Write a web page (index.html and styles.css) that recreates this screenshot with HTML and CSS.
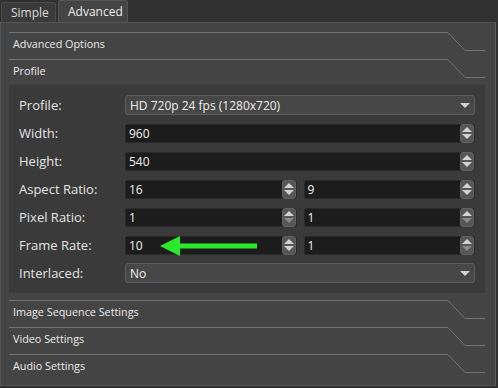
FILE: index.html
```html
<!DOCTYPE html>
<html>
<head>
<meta charset="utf-8">
<link rel="stylesheet" href="styles.css">
</head>
<body>
<div class="tabs">
  <div class="tab">Simple</div>
  <div class="tab active">Advanced</div>
</div>
<div class="pane">
  <div class="hdr"><div class="h-left">Advanced Options</div><svg class="h-diag" width="17" height="19" viewBox="0 0 17 19"><path d="M0 0.5 L17 18.5" stroke="#727272" stroke-width="1" fill="none"/></svg><div class="h-right"></div></div>
  <div class="hdr"><div class="h-left">Profile</div><svg class="h-diag" width="17" height="19" viewBox="0 0 17 19"><path d="M0 0.5 L17 18.5" stroke="#727272" stroke-width="1" fill="none"/></svg><div class="h-right"></div></div>
  <div class="content">
    <div class="row"><div class="lbl">Profile:</div><div class="combo"><span>HD 720p 24 fps (1280x720)</span><span class="caret"></span></div></div>
    <div class="row"><div class="lbl">Width:</div><div class="spin"><span class="val">960</span><span class="btns"><i class="up"></i><i class="dn"></i></span></div></div>
    <div class="row"><div class="lbl">Height:</div><div class="spin"><span class="val">540</span><span class="btns"><i class="up"></i><i class="dn"></i></span></div></div>
    <div class="row"><div class="lbl">Aspect Ratio:</div><div class="pair"><div class="spin"><span class="val">16</span><span class="btns"><i class="up"></i><i class="dn"></i></span></div><div class="spin"><span class="val">9</span><span class="btns"><i class="up"></i><i class="dn"></i></span></div></div></div>
    <div class="row"><div class="lbl">Pixel Ratio:</div><div class="pair"><div class="spin"><span class="val">1</span><span class="btns"><i class="up"></i><i class="dn off"></i></span></div><div class="spin"><span class="val">1</span><span class="btns"><i class="up"></i><i class="dn off"></i></span></div></div></div>
    <div class="row"><div class="lbl">Frame Rate:</div><div class="pair"><div class="spin arrowhost"><span class="val">10</span><svg class="arrow" width="100" height="22" viewBox="0 0 100 22"><path d="M0 11 L20 1 L20 8.5 L97 8.5 L97 13.5 L20 13.5 L20 21 Z" fill="#2bea2b"/></svg><span class="btns"><i class="up"></i><i class="dn"></i></span></div><div class="spin"><span class="val">1</span><span class="btns"><i class="up"></i><i class="dn off"></i></span></div></div></div>
    <div class="row"><div class="lbl">Interlaced:</div><div class="combo"><span>No</span><span class="caret"></span></div></div>
  </div>
  <div class="hdr gap"><div class="h-left">Image Sequence Settings</div><svg class="h-diag" width="17" height="19" viewBox="0 0 17 19"><path d="M0 0.5 L17 18.5" stroke="#727272" stroke-width="1" fill="none"/></svg><div class="h-right"></div></div>
  <div class="hdr"><div class="h-left">Video Settings</div><svg class="h-diag" width="17" height="19" viewBox="0 0 17 19"><path d="M0 0.5 L17 18.5" stroke="#727272" stroke-width="1" fill="none"/></svg><div class="h-right"></div></div>
  <div class="hdr"><div class="h-left">Audio Settings</div><svg class="h-diag" width="17" height="19" viewBox="0 0 17 19"><path d="M0 0.5 L17 18.5" stroke="#727272" stroke-width="1" fill="none"/></svg><div class="h-right"></div></div>
</div>
</body>
</html>
```
FILE: styles.css
```css
* { box-sizing: border-box; }
html, body { margin: 0; padding: 0; background: #303030; }
body {
  width: 498px; height: 388px; overflow: hidden;
  font-family: "Open Sans", "DejaVu Sans", sans-serif;
  color: #e8e8e8;
}
.tabs {
  display: flex; align-items: flex-end; height: 22px; padding-left: 1px; gap: 2px;
}
.tab {
  height: 20px; padding: 0 9px; font-size: 12px; line-height: 20px;
  background: #3a3a3a; border: 1px solid #4a4a4a; border-bottom: none;
  border-radius: 3px 3px 0 0; color: #dcdcdc; width: 55px;
}
.tab.active {
  height: 22px; line-height: 21px; background: #444444; width: 70px; color: #eeeeee;
  border-color: #555;
}
.pane {
  width: 496px; height: 364px; background: #444444;
  border: 1px solid #555555; border-right-color: #5c5c5c;
  padding: 9px 10px 0 8px;
}
.hdr { display: flex; height: 27px; font-size: 10.8px; }
.h-left {
  flex: 1; border-top: 1px solid #727272; padding: 3px 0 0 4px; line-height: 15px; color: #eaeaea;
}
.h-diag { flex: none; display: block; }
.h-right { width: 20px; margin-top: 18px; border-top: 1px solid #727272; height: 1px; }
.hdr.gap { margin-top: 7px; }
.content {
  background: #3a3a3a; margin-top: -1px; height: 208px;
  padding: 10px 10px 0 10px; display: flex; flex-direction: column; gap: 8px;
}
.row { display: flex; align-items: center; height: 20px; }
.lbl { width: 106px; font-size: 13px; color: #e4e4e4; flex: none; }
.combo {
  flex: 1; height: 20px; background: #474747; border: 1px solid #5e5e5e; border-radius: 3px;
  display: flex; align-items: center; justify-content: space-between; padding: 0 0 0 4px;
  font-size: 12px; color: #f0f0f0;
}
.caret {
  width: 0; height: 0; border-left: 5px solid transparent; border-right: 5px solid transparent;
  border-top: 5px solid #cfcfcf; margin-right: 4px;
}
.spin {
  flex: 1; height: 19px; background: #1c1c1c; border: 1px solid #2a2a2a; border-radius: 2px;
  display: flex; align-items: center; font-size: 12px; color: #f2f2f2; position: relative;
}
.val { flex: 1; padding-left: 3px; }
.btns {
  width: 14px; height: 19px; background: #565656; border-radius: 3px; border: 1px solid #616161;
  display: flex; flex-direction: column; align-items: center; justify-content: center; gap: 2px;
}
.btns i { display: block; width: 0; height: 0; border-left: 5px solid transparent; border-right: 5px solid transparent; }
.btns .up { border-bottom: 5px solid #d2d2d2; }
.btns .dn { border-top: 5px solid #d2d2d2; }
.btns .dn.off { border-top-color: #8a8a8a; }
.pair { flex: 1; display: flex; gap: 7px; }
.arrow { position: absolute; left: 34px; top: -2px; }
```
